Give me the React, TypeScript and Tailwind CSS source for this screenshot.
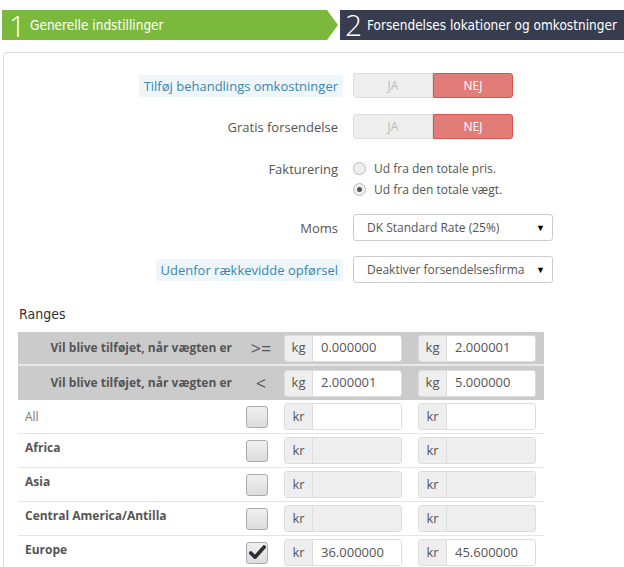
import React from 'react';

const condensed = { fontFamily: '"DejaVu Sans Condensed", "Roboto Condensed", Roboto, sans-serif' };

// Two-state yes/no switch used in the top of the form
function Toggle({ on }: { on: boolean }) {
  return (
    <div className="flex h-[25px] w-[160px] text-[12px]">
      <div
        className={
          on
            ? 'flex flex-1 items-center justify-center rounded-l-[3px] border border-[#4cae4c] bg-[#5cb85c] text-white'
            : 'flex flex-1 items-center justify-center rounded-l-[3px] border border-[#ddd] bg-[#eee] text-[#bbb]'
        }
      >
        JA
      </div>
      <div
        className={
          on
            ? 'flex flex-1 items-center justify-center rounded-r-[3px] border border-[#ddd] bg-[#eee] text-[#bbb]'
            : 'flex flex-1 items-center justify-center rounded-r-[3px] border border-[#d9534f] bg-[#e27c79] text-white'
        }
      >
        NEJ
      </div>
    </div>
  );
}

function Radio({ checked, label }: { checked: boolean; label: string }) {
  return (
    <div className="flex h-[21px] items-center gap-[8px] text-[12px]">
      <span className="flex h-[13px] w-[13px] items-center justify-center rounded-full border border-[#bbb] bg-[#eee]">
        {checked && <span className="h-[5px] w-[5px] rounded-full bg-[#555]" />}
      </span>
      <span className="text-[#555]">{label}</span>
    </div>
  );
}

function Select({ value }: { value: string }) {
  return (
    <div className="flex h-[27px] w-[200px] items-center justify-between rounded-[3px] border border-[#ccc] bg-white pl-[13px] pr-[7px] text-[12px] text-[#555]">
      <span className="overflow-hidden whitespace-nowrap">{value}</span>
      <span className="ml-[4px] text-[9px] text-black">▼</span>
    </div>
  );
}

function FormRow({ label, help, children, className = '' }: { label: string; help?: boolean; children: React.ReactNode; className?: string }) {
  return (
    <div className={'flex ' + className}>
      <div className="flex w-[339px] justify-end">
        <span
          className={
            help
              ? 'h-fit rounded-[2px] bg-[#eef6fb] px-[5px] leading-[22px] text-[#3a87ad]'
              : 'h-fit px-[5px] leading-[22px] text-[#555]'
          }
        >
          {label}
        </span>
      </div>
      <div className="ml-[10px]">{children}</div>
    </div>
  );
}

function InputGroup({ unit, value, disabled }: { unit: string; value?: string; disabled?: boolean }) {
  return (
    <div className="flex h-[27px] w-[118px] overflow-hidden rounded-[3px] border border-[#ddd] text-[13px]">
      <span className="flex w-[28px] items-center justify-center border-r border-[#ddd] bg-[#eee] text-[#555]">{unit}</span>
      <span className={'flex flex-1 items-center pl-[8px] text-[#555] ' + (disabled ? 'bg-[#eee]' : 'bg-white')}>{value}</span>
    </div>
  );
}

function Checkbox({ checked }: { checked: boolean }) {
  return (
    <span className="flex h-[22px] w-[22px] items-center justify-center rounded-[3px] border border-[#aaa] bg-gradient-to-b from-[#f0f0f0] to-[#dcdcdc]">
      {checked && (
        <svg width="17" height="15" viewBox="0 0 17 15">
          <path d="M1.8 8 L6 12.2 L15.2 2" fill="none" stroke="#2f2f3a" strokeWidth="3.6" strokeLinejoin="round" strokeLinecap="round" />
        </svg>
      )}
    </span>
  );
}

const zones = [
  { name: 'All', bold: false, checked: false, a: '', b: '', disabled: false },
  { name: 'Africa', bold: true, checked: false, a: '', b: '', disabled: true },
  { name: 'Asia', bold: true, checked: false, a: '', b: '', disabled: true },
  { name: 'Central America/Antilla', bold: true, checked: false, a: '', b: '', disabled: true },
  { name: 'Europe', bold: true, checked: true, a: '36.000000', b: '45.600000', disabled: false },
];

export default function App() {
  return (
    <div className="h-[567px] w-[624px] overflow-hidden bg-white text-[13px]" style={{ fontFamily: '"Open Sans", sans-serif' }}>
      {/* step header */}
      <div className="mt-[10px] flex h-[30px] text-white" style={condensed}>
        <div className="ml-[2px] flex w-[336px] items-center bg-[#7ab93b] [clip-path:polygon(0_0,calc(100%-11px)_0,100%_50%,calc(100%-11px)_100%,0_100%)]">
          <span className="ml-[7px] w-[21px] text-[29px] font-light leading-none" style={{ fontFamily: '"Open Sans", sans-serif' }}>1</span>
          <span className="text-[13.5px]">Generelle indstillinger</span>
        </div>
        <div className="ml-[2px] flex flex-1 items-center whitespace-nowrap bg-[#373c4f]">
          <span className="ml-[5px] w-[22px] text-[30px] font-light leading-none" style={{ fontFamily: '"Open Sans", sans-serif' }}>2</span>
          <span className="text-[13.5px]">Forsendelses lokationer og omkostninger</span>
        </div>
      </div>

      {/* settings panel */}
      <div className="ml-[3px] mt-[12px] -mr-[20px] rounded-tl-[4px] border-l border-t border-[#ddd] pt-[20px]">
        <FormRow label="Tilføj behandlings omkostninger" help className="items-center">
          <Toggle on={false} />
        </FormRow>
        <FormRow label="Gratis forsendelse" className="mt-[16px] items-center">
          <Toggle on={false} />
        </FormRow>
        <FormRow label="Fakturering" className="mt-[19px]">
          <div>
            <Radio checked={false} label="Ud fra den totale pris." />
            <Radio checked label="Ud fra den totale vægt." />
          </div>
        </FormRow>
        <FormRow label="Moms" className="mt-[14px] items-center">
          <Select value="DK Standard Rate (25%)" />
        </FormRow>
        <FormRow label="Udenfor rækkevidde opførsel" help className="mt-[15px] items-center">
          <Select value="Deaktiver forsendelsesfirma" />
        </FormRow>

        <div className="ml-[15px] mt-[21px] text-[14px] text-[#333]" style={condensed}>
          Ranges
        </div>

        <div className="ml-[14px] mt-[7px] w-[526px]">
          {[
            { op: '>=', a: '0.000000', b: '2.000001' },
            { op: '<', a: '2.000001', b: '5.000000' },
          ].map((r, i) => (
            <div key={i} className={'flex h-[34px] items-center bg-[#cbcbcb] ' + (i === 0 ? 'border-b-2 border-[#e8e8e8]' : '')}>
              <div className="w-[222px] pr-[8px] text-right text-[12px] font-bold text-[#555]">Vil blive tilføjet, når vægten er</div>
              <div className="w-[38px] pl-[4px] text-center text-[18px] text-[#555]">{r.op}</div>
              <div className="ml-[6px]"><InputGroup unit="kg" value={r.a} /></div>
              <div className="ml-[16px]"><InputGroup unit="kg" value={r.b} /></div>
            </div>
          ))}
          {zones.map((z) => (
            <div key={z.name} className="flex h-[34px] items-center border-b border-[#e5e5e5]">
              <div className={'w-[222px] self-start pl-[7px] text-[12px] ' + (z.bold ? 'pt-[5px] font-bold text-[#555]' : 'pt-[8px] text-[#777]')}>{z.name}</div>
              <div className="flex w-[38px] justify-start pl-[6px]"><Checkbox checked={z.checked} /></div>
              <div className="ml-[6px]"><InputGroup unit="kr" value={z.a} disabled={z.disabled} /></div>
              <div className="ml-[16px]"><InputGroup unit="kr" value={z.b} disabled={z.disabled} /></div>
            </div>
          ))}
        </div>
      </div>
    </div>
  );
}
